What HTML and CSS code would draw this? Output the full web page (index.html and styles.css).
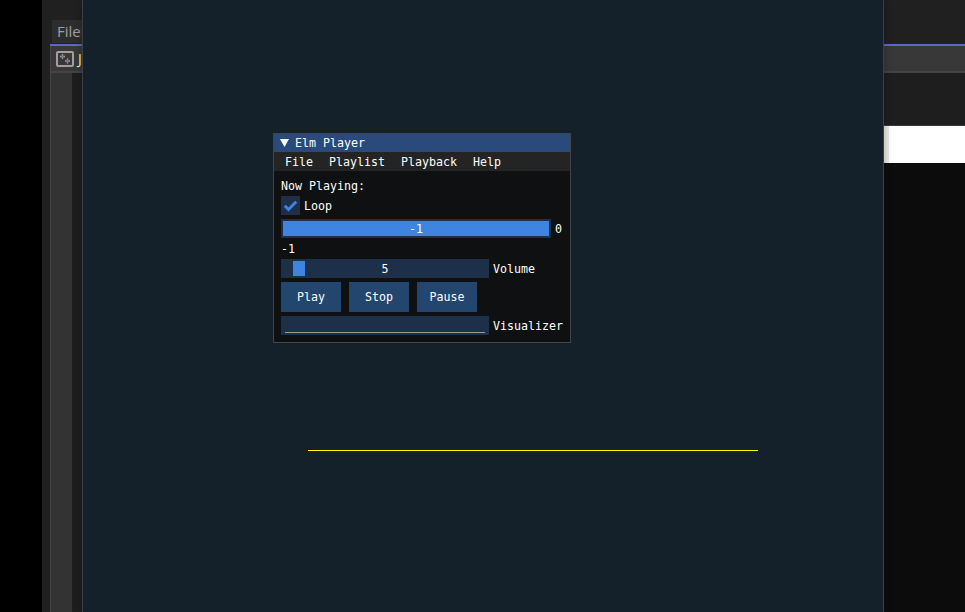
FILE: index.html
```html
<!DOCTYPE html>
<html lang="en">
<head>
<meta charset="utf-8">
<title>Elm Player</title>
<link rel="stylesheet" href="styles.css">
</head>
<body>
<div class="desktop">
  <div class="ide">
    <div class="tabs"><div class="tab">FileP</div></div>
    <div class="crumbs">
      <svg class="crumb-icon" width="18" height="16" viewBox="0 0 18 16" fill="none">
        <rect x="1" y="1" width="16" height="14" rx="1" stroke="#a49d9a" stroke-width="2"/>
        <path d="M6.500 3v5M4 5.500h5M11.500 7.500v5M9 10h5" stroke="#a49d9a" stroke-width="1.300"/>
        <path d="M5.500 4.500h2v2h-2zM10.500 9h2v2h-2z" fill="#6265b8"/>
      </svg>
      <span class="crumb-text">J</span>
    </div>
    <div class="work">
      <div class="gutter"></div>
      <div class="side">
        <div class="toolrow"></div>
        <div class="page"></div>
      </div>
    </div>
  </div>
</div>
<main class="gl-window">
  <section class="player">
    <header class="title">
      <svg width="9" height="8" viewBox="0 0 9 8"><path d="M0 0h9L4.5 8z" fill="#fff"/></svg>
      <span>Elm Player</span>
    </header>
    <nav class="menu"><span>File</span><span>Playlist</span><span>Playback</span><span>Help</span></nav>
    <div class="body">
      <div class="line">Now Playing:</div>
      <div class="row">
        <div class="check">
          <svg width="19" height="19" viewBox="0 0 19 19"><path d="M3.8 9.800l3.700 3.700 7.700-7.700" fill="none" stroke="#3d85e0" stroke-width="2.900"/></svg>
        </div>
        <span class="label">Loop</span>
      </div>
      <div class="row">
        <div class="progress"><div class="fill">-1</div></div>
        <span class="label">0</span>
      </div>
      <div class="line">-1</div>
      <div class="row">
        <div class="slider"><div class="grab"></div><span>5</span></div>
        <span class="label">Volume</span>
      </div>
      <div class="buttons">
        <button>Play</button><button>Stop</button><button>Pause</button>
      </div>
      <div class="row">
        <div class="plot"><div class="trace"></div></div>
        <span class="label">Visualizer</span>
      </div>
    </div>
  </section>
  <div class="wave"></div>
</main>
</body>
</html>
```
FILE: styles.css
```css
* { box-sizing: border-box; }
body {
  margin: 0;
  width: 965px;
  height: 612px;
  overflow: hidden;
  position: relative;
  background: #000;
}
.desktop {
  height: 612px;
  padding-left: 42px;
}
.ide {
  height: 612px;
  padding-left: 8px;
  background: #202020;
  display: flex;
  flex-direction: column;
}
.tabs {
  height: 46px;
  padding: 20px 0 0 2px;
  border-bottom: 2px solid #5b68cc;
}
.tab {
  width: 60px;
  height: 23px;
  padding-left: 5px;
  background: #2d2d2d;
  color: #a0a0a0;
  font: 15px/22px "Open Sans", "Noto Sans", sans-serif;
}
.crumbs {
  height: 27px;
  padding: 5px 0 0 5px;
  display: flex;
  background: #383838;
  border-left: 1px solid #454545;
  border-bottom: 2px solid #444;
}
.crumb-icon { flex: none; }
.crumb-text {
  margin-left: 4px;
  color: #ffffa0;
  font: 14px/16px "Open Sans", "Noto Sans", sans-serif;
}
.work {
  flex: 1;
  display: flex;
  border-left: 1px solid #444;
}
.gutter {
  width: 21px;
  background: #333;
}
.side {
  flex: 1;
  display: flex;
  flex-direction: column;
  background: linear-gradient(to right, #1e1e1e 0 11px, #0c0c0c 11px);
}
.toolrow {
  height: 53px;
  margin-left: 11px;
  background: #1e1e1e;
  border-bottom: 1px solid #3a3a3a;
}
.page {
  height: 37px;
  margin-left: 811px;
  background: #fff;
  border-left: 6px solid #e9eae2;
}
.gl-window {
  position: absolute;
  left: 82px;
  top: 0;
  width: 802px;
  height: 612px;
  background: #14212b;
  border: solid #3b4146;
  border-width: 0 1px;
  box-shadow: 0 0 8px rgba(0, 0, 0, .28);
}
.player {
  position: absolute;
  left: 190px;
  top: 133px;
  width: 298px;
  height: 210px;
  background: #0f1011;
  border: 1px solid #414449;
  color: #fff;
  font: 11.63px/13px "DejaVu Sans Mono", monospace;
}
.title {
  height: 18px;
  padding-left: 6px;
  display: flex;
  align-items: center;
  gap: 6px;
  background: #294a7a;
}
.menu {
  height: 19px;
  padding: 4px 0 0 11px;
  display: flex;
  gap: 16px;
  background: #242424;
}
.body {
  padding: 8px 7px;
  display: flex;
  flex-direction: column;
  gap: 4px;
}
.line {
  height: 13px;
  padding-top: 1px;
}
.row {
  height: 19px;
  display: flex;
  align-items: center;
  gap: 4px;
}
.label { padding-top: 2px; }
.check {
  width: 19px;
  height: 19px;
  display: flex;
  background: #1d2f49;
}
.progress {
  width: 270px;
  height: 19px;
  padding: 2px;
  background: #1d2f49;
}
.fill {
  height: 15px;
  line-height: 16px;
  background: #3d85e0;
  text-align: center;
}
.slider {
  position: relative;
  width: 208px;
  height: 19px;
  line-height: 20px;
  background: #1d2f49;
  text-align: center;
}
.grab {
  position: absolute;
  left: 12px;
  top: 2px;
  width: 12px;
  height: 15px;
  background: #3d85e0;
}
.buttons {
  display: flex;
  gap: 8px;
}
.buttons button {
  width: 60px;
  height: 30px;
  padding: 0;
  border: 0;
  background: #23466e;
  color: inherit;
  font: inherit;
}
.plot {
  width: 208px;
  height: 19px;
  padding: 16px 4px 0;
  background: #1d2f49;
}
.trace {
  height: 1px;
  background: #9c9c95;
}
.wave {
  position: absolute;
  left: 225px;
  top: 450px;
  width: 450px;
  height: 1px;
  background: #ff0;
}
```
